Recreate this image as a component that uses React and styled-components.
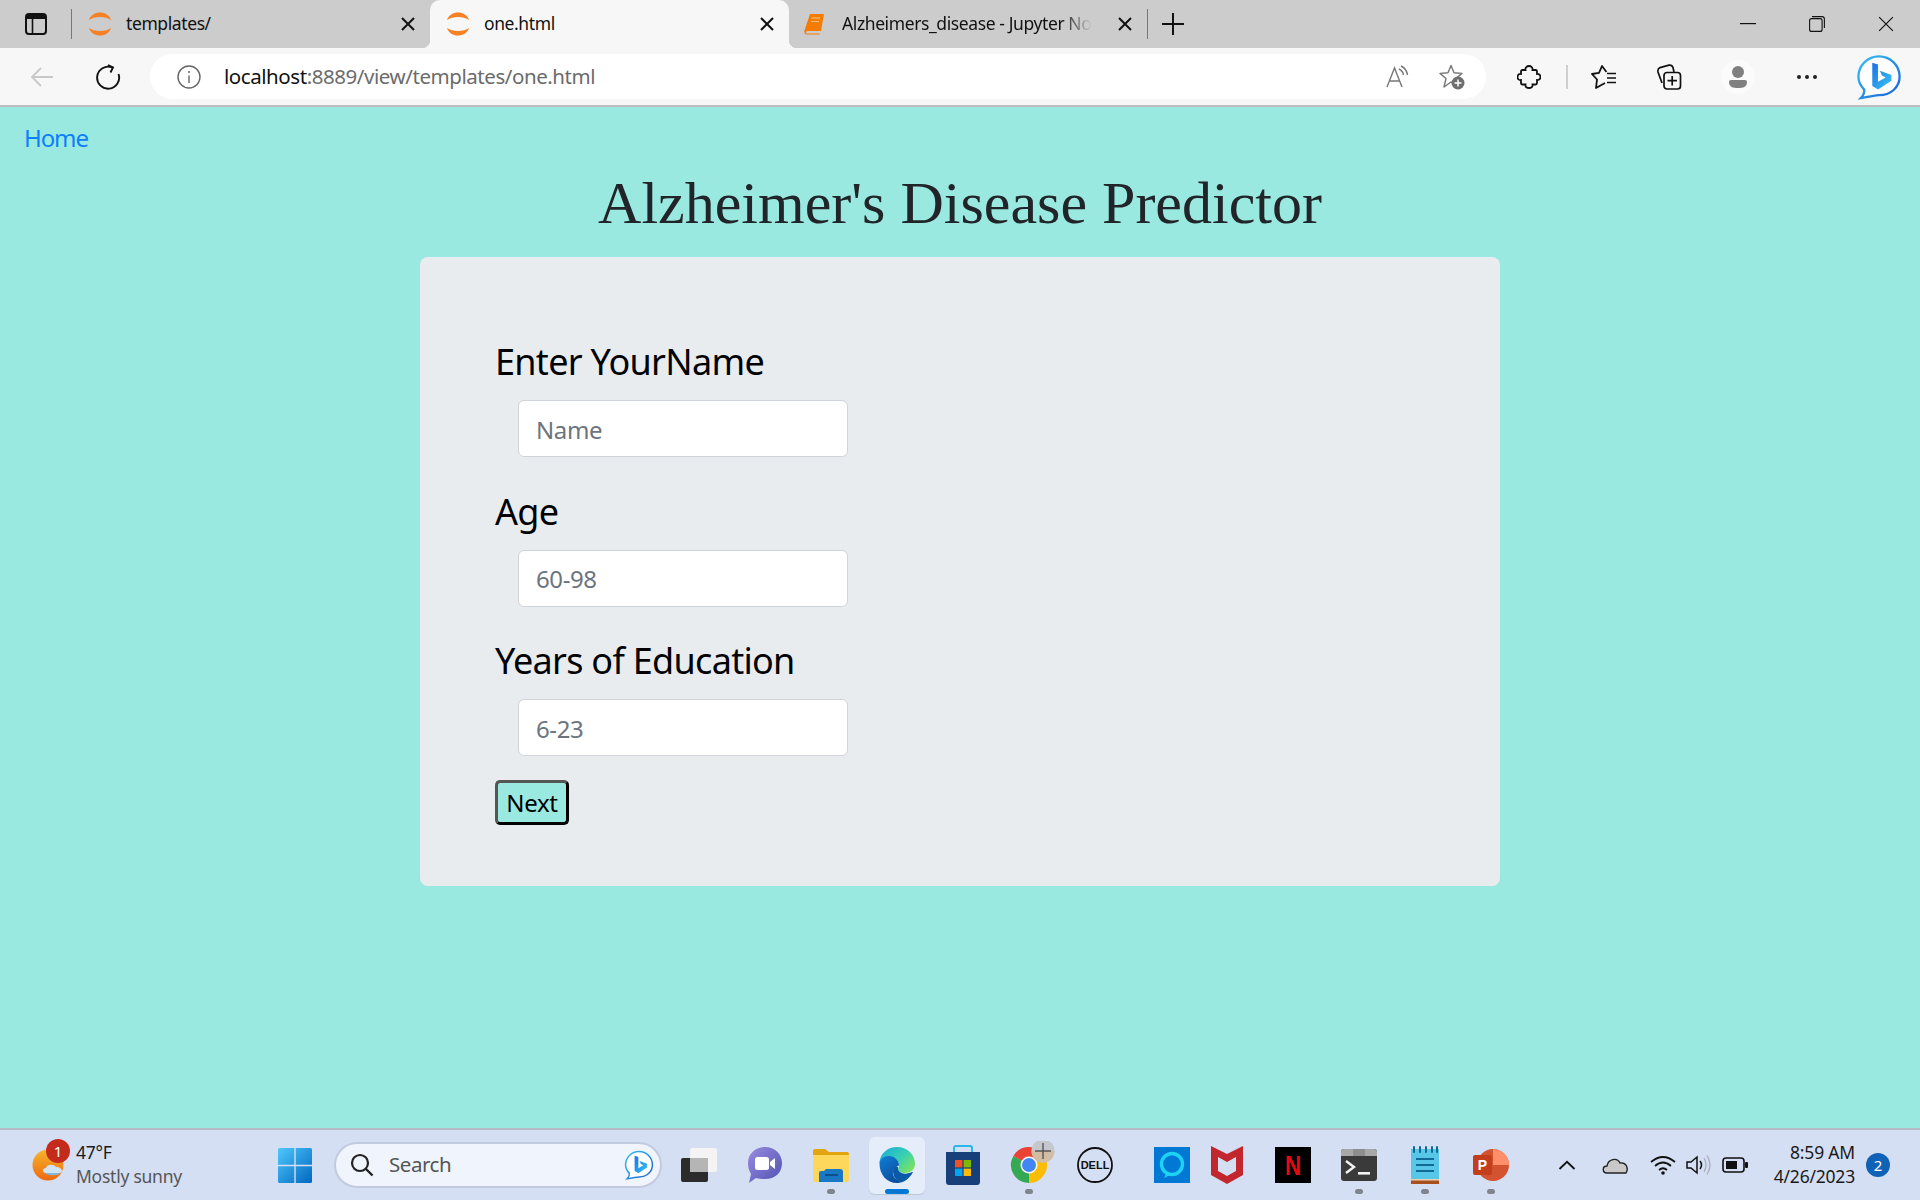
import React from "react";
import styled, { createGlobalStyle } from "styled-components";

const UI_FONT = `"Noto Sans", "Open Sans", sans-serif`;

const GlobalStyle = createGlobalStyle`
  html, body {
    margin: 0;
    padding: 0;
    height: 100%;
    overflow: hidden;
    font-family: ${UI_FONT};
  }
`;

const Screen = styled.div`
  width: 1920px;
  height: 1200px;
  display: flex;
  flex-direction: column;
  overflow: hidden;
`;

/* ---------- tab strip ---------- */
const TabStrip = styled.div`
  height: 48px;
  flex: none;
  display: flex;
  background: #cccccc;
`;

const StripLead = styled.div`
  width: 71px;
  display: flex;
  align-items: center;
  padding-left: 25px;
  box-sizing: border-box;
`;

const StripDivider = styled.div`
  width: 1px;
  height: 30px;
  margin-top: 9px;
  background: #777;
  flex: none;
`;

const Tab = styled.div`
  position: relative;
  width: ${(p) => p.$w}px;
  box-sizing: border-box;
  padding: 0 15px 0 ${(p) => p.$pl}px;
  display: flex;
  align-items: center;
  gap: ${(p) => p.$gap}px;
  flex: none;
  background: ${(p) => (p.$active ? "#f7f7f7" : "transparent")};
  border-radius: ${(p) => (p.$active ? "10px 10px 0 0" : "0")};
  ${(p) =>
    p.$active &&
    `
    &::before, &::after {
      content: "";
      position: absolute;
      bottom: 0;
      width: 8px;
      height: 8px;
    }
    &::before { left: -8px; background: radial-gradient(circle at 0 0, transparent 8px, #f7f7f7 8.5px); }
    &::after { right: -8px; background: radial-gradient(circle at 100% 0, transparent 8px, #f7f7f7 8.5px); }
  `}
`;

const TabTitle = styled.span`
  flex: 1;
  min-width: 0;
  font-size: 17.5px;
  letter-spacing: -0.4px;
  color: #111;
  white-space: nowrap;
  overflow: hidden;
  padding-bottom: 2px;
  ${(p) =>
    p.$fade &&
    `-webkit-mask-image: linear-gradient(to right, #000 84%, transparent 96%);
     mask-image: linear-gradient(to right, #000 84%, transparent 96%);`}
`;

const NewTab = styled.div`
  width: 50px;
  display: flex;
  align-items: center;
  justify-content: center;
`;

const WindowControls = styled.div`
  margin-left: auto;
  display: flex;
`;

const WindowButton = styled.div`
  width: 69px;
  display: flex;
  align-items: center;
  justify-content: center;
`;

/* ---------- toolbar ---------- */
const Toolbar = styled.div`
  height: 59px;
  flex: none;
  box-sizing: border-box;
  display: flex;
  align-items: center;
  background: #f7f7f7;
  border-bottom: 2px solid #bdbdbd;
  padding-left: 9px;
`;

const ToolSlot = styled.div`
  width: ${(p) => p.$w || 60}px;
  margin-left: ${(p) => p.$ml || 0}px;
  height: 44px;
  flex: none;
  display: flex;
  align-items: center;
  justify-content: center;
`;

const ToolDivider = styled.div`
  width: 2px;
  height: 24px;
  margin-left: 7px;
  background: #cfcfcf;
  flex: none;
`;

const AddressBar = styled.div`
  width: 1336px;
  height: 45px;
  margin-left: 9px;
  flex: none;
  box-sizing: border-box;
  background: #fff;
  border-radius: 23px;
  display: flex;
  align-items: center;
  padding: 0 7px 0 26px;
`;

const Url = styled.div`
  margin-left: 22px;
  padding-bottom: 2px;
  flex: 1;
  font-size: 20.5px;
  letter-spacing: -0.44px;
  color: #6b6b6b;
  white-space: nowrap;
  b {
    font-weight: 400;
    color: #111;
  }
`;

/* ---------- page ---------- */
const Page = styled.main`
  flex: 1;
  min-height: 0;
  background: #9ae9e1;
  display: flex;
  flex-direction: column;
  align-items: center;
`;

const HomeRow = styled.div`
  align-self: stretch;
  padding: 13px 24px 0;
  height: 36px;
`;

const HomeLink = styled.a`
  font-size: 24px;
  line-height: 36px;
  color: #0d7ffd;
  text-decoration: none;
  letter-spacing: -1.1px;
`;

const Title = styled.h1`
  margin: 11px 0 18px;
  font-family: "Liberation Serif", "Times New Roman", serif;
  font-weight: 400;
  font-size: 60px;
  line-height: 72px;
  color: #212529;
`;

const Card = styled.form`
  width: 1080px;
  box-sizing: border-box;
  background: #e9ecef;
  border-radius: 8px;
  padding: 78px 75px 61px;
`;

const Field = styled.div`
  margin-bottom: ${(p) => p.$mb}px;
`;

const FieldLabel = styled.label`
  display: block;
  font-size: 36px;
  line-height: 54px;
  letter-spacing: -0.7px;
  color: #000;
  margin-bottom: 11px;
`;

const TextInput = styled.input`
  display: block;
  margin-left: 23px;
  width: 330px;
  height: 57px;
  box-sizing: border-box;
  padding: 1px 18px 0 17px;
  border: 1.5px solid #ced4da;
  border-radius: 6px;
  background: #fff;
  font-family: ${UI_FONT};
  font-size: 24px;
  letter-spacing: -0.4px;
  outline: none;
  &::placeholder {
    color: #6c757d;
    opacity: 1;
  }
`;

const NextButton = styled.button`
  display: block;
  width: 74px;
  height: 45px;
  box-sizing: border-box;
  padding: 0;
  background: #9ae9e1;
  border-style: solid;
  border-width: 3px;
  border-color: #555 #000 #000 #555;
  border-radius: 5px;
  font-family: ${UI_FONT};
  font-size: 24px;
  letter-spacing: -0.3px;
  color: #000;
`;

/* ---------- taskbar ---------- */
const Taskbar = styled.footer`
  height: 72px;
  flex: none;
  box-sizing: border-box;
  border-top: 2px solid #b4bac6;
  background: #d5dff4;
  display: flex;
  align-items: center;
`;

const Weather = styled.div`
  position: relative;
  margin-left: 32px;
  width: 246px;
  height: 56px;
  display: flex;
  align-items: center;
  flex: none;
`;

const WeatherBadge = styled.span`
  position: absolute;
  left: 14px;
  top: 2px;
  width: 24px;
  height: 24px;
  border-radius: 50%;
  background: #c42b1c;
  color: #fff;
  font-size: 15px;
  line-height: 24px;
  text-align: center;
`;

const WeatherText = styled.div`
  margin-left: 11px;
  padding-bottom: 2px;
  display: flex;
  flex-direction: column;
  font-size: 17.5px;
  line-height: 24px;
  letter-spacing: -0.25px;
  color: #1a1a1a;
  span + span {
    color: #555;
  }
`;

const SearchBox = styled.div`
  margin-left: 22px;
  width: 328px;
  height: 46px;
  flex: none;
  box-sizing: border-box;
  background: #f0f4fd;
  border: 2px solid #c2cbdd;
  border-radius: 23px;
  display: flex;
  align-items: center;
  padding: 0 6px 0 14px;
  font-size: 20.5px;
  letter-spacing: -0.45px;
  color: #555;
  span {
    flex: 1;
    margin-left: 15px;
    padding-bottom: 2px;
  }
`;

const Slot = styled.div`
  position: relative;
  width: ${(p) => p.$w || 66}px;
  margin-left: ${(p) => p.$ml || 0}px;
  height: 57px;
  flex: none;
  display: flex;
  align-items: center;
  justify-content: center;
  ${(p) =>
    p.$active &&
    `
    &::before {
      content: "";
      position: absolute;
      inset: 0 5px;
      background: #e6edfa;
      border-radius: 6px;
      box-shadow: 0 1px 1px #bcc6da;
    }
    &::after {
      content: "";
      position: absolute;
      left: 21px;
      right: 21px;
      bottom: 0;
      height: 5px;
      border-radius: 3px;
      background: #0078d4;
    }
    svg { position: relative; }
  `}
  ${(p) =>
    p.$running &&
    `
    &::after {
      content: "";
      position: absolute;
      left: 50%;
      margin-left: -4px;
      bottom: 0;
      width: 8px;
      height: 5px;
      border-radius: 3px;
      background: #80848e;
    }
  `}
`;

const Clock = styled.div`
  width: 100px;
  margin-left: 2px;
  padding-bottom: 2px;
  flex: none;
  text-align: right;
  font-size: 17.5px;
  line-height: 24px;
  letter-spacing: -0.2px;
  color: #1a1a1a;
  white-space: nowrap;
`;

const NoticeBadge = styled.div`
  width: 24px;
  height: 24px;
  margin-left: 11px;
  flex: none;
  border-radius: 50%;
  background: #0f62b5;
  color: #fff;
  font-size: 15px;
  line-height: 24px;
  text-align: center;
`;

/* ---------- drawings ---------- */
const JupyterIcon = () => (
  <svg width="24" height="28" viewBox="0 0 24 28">
    <path d="M1 10 C4 0 20 0 23 10 C18 6 6 6 1 10Z" fill="#f58025" />
    <path d="M1 18 C6 22 18 22 23 18 C20 28 4 28 1 18Z" fill="#f58025" />
  </svg>
);

const BookIcon = () => (
  <svg width="22" height="22" viewBox="0 0 22 22">
    <path d="M6 1 H20 L17 18 H4 C1.5 18 1 20.5 3.5 20.5 H16 L15.5 21.5 H3 C0.5 21.5 0 19.5 0.5 17.5Z" fill="#f57c00" />
    <path d="M7.5 5 H16 M7 8.5 H15" stroke="#ffc583" strokeWidth="1.2" />
  </svg>
);

const CloseX = ({ size = 14, w = 2 }) => (
  <svg width={size} height={size} viewBox="0 0 14 14">
    <path d="M1 1 L13 13 M13 1 L1 13" stroke="#111" strokeWidth={w} fill="none" />
  </svg>
);

const BingIcon = ({ size }) => (
  <svg width={size} height={size} viewBox="0 0 48 48">
    <defs>
      <linearGradient id="bingRing" x1="0" y1="0" x2="1" y2="1">
        <stop offset="0" stopColor="#35c1f1" />
        <stop offset="1" stopColor="#1b5fd8" />
      </linearGradient>
      <linearGradient id="bingB" x1="0" y1="0" x2="1" y2="1">
        <stop offset="0" stopColor="#1c6fe8" />
        <stop offset="1" stopColor="#38c6ee" />
      </linearGradient>
    </defs>
    <path
      d="M24 2.5 C36 2.5 45.5 12 45.5 23.5 C45.5 35 36 43 24 43 C20 43 16 44.5 5 46 C8 43 9 40 8.5 37 C4.5 33 2.5 28.5 2.5 23.5 C2.5 12 12 2.5 24 2.5Z"
      fill="#fff"
      stroke="url(#bingRing)"
      strokeWidth="2.4"
    />
    <path d="M17 9 L23 11 V29 L31 24.5 L27 22.5 L25 17.5 L37 22 V28 L23 37 L17 33.5Z" fill="url(#bingB)" />
  </svg>
);

const WeatherIcon = () => (
  <svg width="33" height="32" viewBox="0 0 33 32">
    <defs>
      <linearGradient id="sunFill" x1="0" y1="0" x2="0" y2="1">
        <stop offset="0" stopColor="#f5b52b" />
        <stop offset="1" stopColor="#ee6a13" />
      </linearGradient>
    </defs>
    <circle cx="16" cy="16" r="15.5" fill="url(#sunFill)" />
    <path d="M14 24 C10 24 10 19 14 19 C15 15 22 15 24 18 C29 17 33 24 27 24Z" fill="#cfe4f7" />
    <path d="M13 24 H28 C26 27 16 27 13 24Z" fill="#7fb7e6" />
  </svg>
);

const WindowsLogo = () => (
  <svg width="34" height="35" viewBox="0 0 34 35">
    <defs>
      <linearGradient id="winFill" x1="0" y1="0" x2="1" y2="1">
        <stop offset="0" stopColor="#4fc8fb" />
        <stop offset="1" stopColor="#0067c0" />
      </linearGradient>
    </defs>
    <path d="M0 1.5 Q0 0 1.5 0 H16.3 V16.8 H0Z M17.7 0 H32.5 Q34 0 34 1.5 V16.8 H17.7Z M0 18.2 H16.3 V35 H1.5 Q0 35 0 33.5Z M17.7 18.2 H34 V33.5 Q34 35 32.5 35 H17.7Z" fill="url(#winFill)" />
  </svg>
);

const TaskViewIcon = () => (
  <svg width="36" height="34" viewBox="0 0 36 34">
    <rect x="0" y="10" width="27" height="24" rx="2" fill="#2b2b2b" />
    <rect x="9" y="0" width="27" height="24" rx="2" fill="#f4f4f4" />
    <rect x="9" y="10" width="18" height="14" fill="#b5b5b5" />
  </svg>
);

const TeamsIcon = () => (
  <svg width="34" height="36" viewBox="0 0 34 36">
    <defs>
      <linearGradient id="teamsFill" x1="0" y1="0" x2="1" y2="1">
        <stop offset="0" stopColor="#9a8be0" />
        <stop offset="1" stopColor="#4f52b2" />
      </linearGradient>
    </defs>
    <path d="M17 0 C27 0 34 7 34 16 C34 26 27 32 17 32 C14 32 11 32 8 31 L1 36 L3 27 C1 24 0 20 0 16 C0 7 7 0 17 0Z" fill="url(#teamsFill)" />
    <rect x="7" y="10" width="14" height="13" rx="2.5" fill="#fff" />
    <path d="M22 15 L27 11 V22 L22 18Z" fill="#fff" />
  </svg>
);

const ExplorerIcon = () => (
  <svg width="36" height="33" viewBox="0 0 36 33">
    <path d="M0 2 Q0 0 2 0 H12 L16 3 H34 Q36 3 36 5 V12 H0Z" fill="#e2a50f" />
    <path d="M0 6 H36 V31 Q36 33 34 33 H2 Q0 33 0 31Z" fill="#fdd65c" />
    <path d="M6 33 V24 Q6 22 8 22 H11 L13 20 H27 Q30 20 30 23 V33Z" fill="#1878c4" />
    <rect x="12" y="25" width="13" height="2" fill="#0f4f8f" />
  </svg>
);

const EdgeIcon = () => (
  <svg width="36" height="36" viewBox="0 0 36 36">
    <defs>
      <linearGradient id="edgeTop" x1="0" y1="0" x2="1" y2="0.8">
        <stop offset="0" stopColor="#18a8d8" />
        <stop offset="0.55" stopColor="#35d0b4" />
        <stop offset="1" stopColor="#7fe25c" />
      </linearGradient>
      <linearGradient id="edgeBase" x1="0" y1="0" x2="0.6" y2="1">
        <stop offset="0" stopColor="#0f7ed6" />
        <stop offset="1" stopColor="#0b4f9e" />
      </linearGradient>
    </defs>
    <path d="M18 0 C29 0 36 8 36 17 C36 23 31 26 26 26 C22 26 19 24 19 22 C19 21 20 20 20 18 C20 13 15 10 10 10 C5 10 1.5 13 0.5 15 C1.5 6 9 0 18 0Z" fill="url(#edgeTop)" />
    <path d="M0.5 15 C2 11 6 9 10 9 C15 9 20 13 20 18 C20 19 15 20 14 24 C13 30 18 34 22 35 C20 36 19 36 18 36 C8 36 0 28 0.5 15Z" fill="url(#edgeBase)" />
    <path d="M14 24 C14 20 17 19 19 20 C18 25 24 28 30 26 C32 25.5 33 25 34 25 C31 31 26 35 21 35.5 C17 34 14 29 14 24Z" fill="#0a5aa8" />
  </svg>
);

const StoreIcon = () => (
  <svg width="36" height="40" viewBox="0 0 36 40">
    <path d="M9 9 V3 Q9 1 11 1 H25 Q27 1 27 3 V9" fill="none" stroke="#29b6e8" strokeWidth="2" />
    <path d="M1 7 H35 V37 Q35 40 32 40 H4 Q1 40 1 37Z" fill="#17407a" />
    <rect x="10" y="15" width="7.4" height="7.4" fill="#f25022" />
    <rect x="18.6" y="15" width="7.4" height="7.4" fill="#7fba00" />
    <rect x="10" y="23.6" width="7.4" height="7.4" fill="#00a4ef" />
    <rect x="18.6" y="23.6" width="7.4" height="7.4" fill="#ffb900" />
  </svg>
);

const ChromeIcon = () => (
  <svg width="66" height="48" viewBox="0 0 66 48">
    <g transform="translate(15 6)">
      <path d="M18 18 L2.4 9 A18 18 0 0 1 33.6 9 Z" fill="#ea4335" />
      <path d="M18 18 L33.6 9 A18 18 0 0 1 18 36 Z" fill="#fbbc04" />
      <path d="M18 18 L18 36 A18 18 0 0 1 2.4 9 Z" fill="#34a853" />
      <circle cx="18" cy="18" r="8.5" fill="#fff" />
      <circle cx="18" cy="18" r="7" fill="#4285f4" />
    </g>
    <circle cx="47" cy="10" r="11.5" fill="#c4c8cc" />
    <path d="M35.5 10 A11.5 11.5 0 0 0 58.5 10Z" fill="#d2bda4" />
    <path d="M47 2 V18 M39 10 H55" stroke="#555" strokeWidth="1.4" />
  </svg>
);

const DellIcon = () => (
  <svg width="36" height="36" viewBox="0 0 36 36">
    <circle cx="18" cy="18" r="17" fill="none" stroke="#111" strokeWidth="1.8" />
    <text x="18" y="22" textAnchor="middle" fontFamily="Liberation Sans, sans-serif" fontWeight="700" fontSize="11" fill="#111">
      DELL
    </text>
  </svg>
);

const AlexaIcon = () => (
  <svg width="36" height="36" viewBox="0 0 36 36">
    <rect width="36" height="36" fill="#0078d4" />
    <circle cx="18" cy="17" r="10.5" fill="none" stroke="#1cd2f5" strokeWidth="3.4" />
    <path d="M10 31 L13 25 L18 27Z" fill="#1cd2f5" />
  </svg>
);

const McAfeeIcon = () => (
  <svg width="32" height="38" viewBox="0 0 32 38">
    <path d="M0 0 L16 8 L32 0 V29 L16 38 L0 29Z" fill="#c1272d" />
    <path d="M7 11 L16 16 L25 11 V25 L16 30 L7 25Z" fill="#d5dff4" />
  </svg>
);

const NetflixIcon = () => (
  <svg width="36" height="36" viewBox="0 0 36 36">
    <rect width="36" height="36" fill="#000" />
    <text x="18" y="28" textAnchor="middle" fontFamily="Liberation Sans, sans-serif" fontWeight="700" fontSize="28" fill="#e50914" transform="translate(3.6 0) scale(0.8 1)">
      N
    </text>
  </svg>
);

const TerminalIcon = () => (
  <svg width="36" height="32" viewBox="0 0 36 32">
    <rect width="36" height="32" rx="3" fill="#3a3a3a" />
    <path d="M0 3 Q0 0 3 0 H33 Q36 0 36 3 V7 H0Z" fill="#a8a8a8" />
    <rect x="12" y="0" width="12" height="7" fill="#8e8e8e" />
    <path d="M5 12 L13 18 L5 24" fill="none" stroke="#f2f2f2" strokeWidth="2.4" />
    <rect x="17" y="23" width="12" height="2.6" fill="#f2f2f2" />
  </svg>
);

const NotepadIcon = () => (
  <svg width="28" height="38" viewBox="0 0 28 38">
    <rect y="3" width="28" height="31" fill="#58c6e6" />
    <path d="M0 33 H28 V38 H0Z" fill="#a9501c" />
    <path d="M0 33 H28 V34.5 H0Z" fill="#e6d2b8" />
    <path d="M3 1 V6 M9 1 V6 M15 1 V6 M21 1 V6 M26 1 V6" stroke="#0d6a96" strokeWidth="2" strokeLinecap="round" />
    <path d="M5 13 H23 M5 19 H23 M5 25 H23" stroke="#0f6a97" strokeWidth="2" />
  </svg>
);

const PowerPointIcon = () => (
  <svg width="36" height="36" viewBox="0 0 36 36">
    <circle cx="20" cy="18" r="16" fill="#d35230" />
    <path d="M20 2 A16 16 0 0 1 36 18 H20Z" fill="#ff8f6b" />
    <rect x="0" y="8" width="19" height="20" rx="2" fill="#c43e1c" />
    <text x="9.5" y="23" textAnchor="middle" fontFamily="Liberation Sans, sans-serif" fontWeight="700" fontSize="14" fill="#fff">
      P
    </text>
  </svg>
);

const App = () => (
  <>
    <GlobalStyle />
    <Screen>
      <TabStrip>
        <StripLead>
          <svg width="22" height="22" viewBox="0 0 22 22">
            <rect x="1" y="1" width="20" height="20" rx="3" fill="none" stroke="#111" strokeWidth="2" />
            <path d="M1 4 Q1 1 4 1 H18 Q21 1 21 4 V6 H1Z" fill="#111" />
            <path d="M7.5 6 V21" stroke="#111" strokeWidth="1.6" />
          </svg>
        </StripLead>
        <StripDivider />
        <Tab $w={358} $pl={16} $gap={14}>
          <JupyterIcon />
          <TabTitle>templates/</TabTitle>
          <CloseX />
        </Tab>
        <Tab $w={359} $pl={16} $gap={14} $active>
          <JupyterIcon />
          <TabTitle>one.html</TabTitle>
          <CloseX />
        </Tab>
        <Tab $w={358} $pl={15} $gap={16}>
          <BookIcon />
          <TabTitle $fade>Alzheimers_disease - Jupyter Notebook</TabTitle>
          <CloseX />
        </Tab>
        <StripDivider />
        <NewTab>
          <svg width="22" height="22" viewBox="0 0 22 22">
            <path d="M11 0 V22 M0 11 H22" stroke="#111" strokeWidth="2" />
          </svg>
        </NewTab>
        <WindowControls>
          <WindowButton>
            <svg width="16" height="2" viewBox="0 0 16 2">
              <rect width="16" height="1.2" fill="#111" />
            </svg>
          </WindowButton>
          <WindowButton>
            <svg width="16" height="16" viewBox="0 0 16 16">
              <rect x="0.6" y="2.6" width="12.5" height="12.8" rx="2" fill="none" stroke="#111" strokeWidth="1.1" />
              <path d="M3 .6 H13 Q15.4 .6 15.4 3 V12" fill="none" stroke="#111" strokeWidth="1.1" />
            </svg>
          </WindowButton>
          <WindowButton>
            <CloseX size={16} w={1} />
          </WindowButton>
        </WindowControls>
      </TabStrip>

      <Toolbar>
        <ToolSlot $w={66}>
          <svg width="24" height="22" viewBox="0 0 24 22">
            <path d="M23 11 H2 M11 2 L2 11 L11 20" fill="none" stroke="#c8c8c8" strokeWidth="1.8" />
          </svg>
        </ToolSlot>
        <ToolSlot $w={66}>
          <svg width="26" height="26" viewBox="0 0 26 26">
            <path d="M17 3.4 A11 11 0 1 0 23.5 10" fill="none" stroke="#111" strokeWidth="1.9" />
            <path d="M13 1 L18 3.5 L15.5 8.5" fill="none" stroke="#111" strokeWidth="1.9" />
          </svg>
        </ToolSlot>
        <AddressBar>
          <svg width="26" height="26" viewBox="0 0 26 26">
            <circle cx="13" cy="13" r="11" fill="none" stroke="#666" strokeWidth="1.4" />
            <path d="M13 11.5 V19" stroke="#666" strokeWidth="1.4" />
            <circle cx="13" cy="8" r="1" fill="#666" />
          </svg>
          <Url>
            <b>localhost</b>:8889/view/templates/one.html
          </Url>
          <ToolSlot $w={54}>
            <svg width="24" height="24" viewBox="0 0 24 24">
              <path d="M1 22 L8.5 3 L16 22 M3.6 16 H13.4" fill="none" stroke="#777" strokeWidth="1.4" />
              <path d="M13 4 Q17 6 17.5 10 M15 1 Q20.5 3.5 21.5 10" fill="none" stroke="#777" strokeWidth="1.4" />
            </svg>
          </ToolSlot>
          <ToolSlot $w={54}>
            <svg width="26" height="26" viewBox="0 0 26 26">
              <path d="M12 1.5 L15 8.8 L23 9.4 L17 14.5 L18.5 22 L12 18 L5 23 L7 14.5 L1 9.4 L9 8.8Z" fill="none" stroke="#777" strokeWidth="1.4" strokeLinejoin="round" />
              <circle cx="19" cy="19" r="6.5" fill="#6e6e6e" />
              <path d="M19 15.5 V22.5 M15.5 19 H22.5" stroke="#fff" strokeWidth="1.5" />
            </svg>
          </ToolSlot>
        </AddressBar>
        <ToolSlot $ml={13}>
          <svg width="24" height="24" viewBox="0 0 24 24">
            <path d="M8.5 5 C8 2.5 10 1 12 1 C14 1 16 2.5 15.5 5 H18.5 Q20 5 20 6.5 V9 C22.5 8.7 23.5 10.5 23.5 12 C23.5 13.5 22.5 15.3 20 15 V18 Q20 19.5 18.5 19.5 H15.5 C16 22 14 23 12 23 C10 23 8 22 8.5 19.5 H5.5 Q4 19.5 4 18 V15 C1.5 15.5 .5 13.5 .5 12 C.5 10.5 1.5 8.5 4 9 V6.5 Q4 5 5.5 5Z" fill="none" stroke="#111" strokeWidth="1.8" />
          </svg>
        </ToolSlot>
        <ToolDivider />
        <ToolSlot $ml={6}>
          <svg width="26" height="26" viewBox="0 0 26 26">
            <path d="M15.5 8 L11 2 L8 8.8 L1 10 L6 15.5 L5 24 L14 19" fill="none" stroke="#111" strokeWidth="1.8" strokeLinejoin="round" />
            <path d="M16 9.5 H25 M16 14 H25 M16 18.5 H25" stroke="#111" strokeWidth="1.7" />
          </svg>
        </ToolSlot>
        <ToolSlot $ml={5}>
          <svg width="26" height="26" viewBox="0 0 26 26">
            <path d="M6 19 L2 8 Q1.4 4.5 4 3.6 L13 1.2 Q16 .8 17 3.5 L18 8" fill="none" stroke="#111" strokeWidth="1.7" />
            <rect x="8" y="8.5" width="16.5" height="16.5" rx="3" fill="#f7f7f7" stroke="#111" strokeWidth="1.7" />
            <path d="M16.2 12 V21.5 M11.5 16.7 H21" stroke="#111" strokeWidth="1.7" />
          </svg>
        </ToolSlot>
        <ToolSlot $ml={9}>
          <svg width="36" height="36" viewBox="0 0 36 36">
            <circle cx="18" cy="18" r="17" fill="#fbfbfb" />
            <circle cx="18" cy="13" r="6" fill="#808080" />
            <path d="M9 23 Q9 21 11 21 H25 Q27 21 27 23 C27 28 23 29 18 29 C13 29 9 28 9 23Z" fill="#808080" />
          </svg>
        </ToolSlot>
        <ToolSlot $ml={9}>
          <svg width="22" height="6" viewBox="0 0 22 6">
            <circle cx="3" cy="3" r="2" fill="#222" />
            <circle cx="11" cy="3" r="2" fill="#222" />
            <circle cx="19" cy="3" r="2" fill="#222" />
          </svg>
        </ToolSlot>
        <ToolSlot $ml={12}>
          <BingIcon size={46} />
        </ToolSlot>
      </Toolbar>

      <Page>
        <HomeRow>
          <HomeLink href="#home">Home</HomeLink>
        </HomeRow>
        <Title>Alzheimer's Disease Predictor</Title>
        <Card onSubmit={(e) => e.preventDefault()}>
          <Field $mb={27.5}>
            <FieldLabel>Enter YourName</FieldLabel>
            <TextInput placeholder="Name" />
          </Field>
          <Field $mb={27.5}>
            <FieldLabel>Age</FieldLabel>
            <TextInput placeholder="60-98" />
          </Field>
          <Field $mb={24}>
            <FieldLabel>Years of Education</FieldLabel>
            <TextInput placeholder="6-23" />
          </Field>
          <NextButton type="submit">Next</NextButton>
        </Card>
      </Page>

      <Taskbar>
        <Weather>
          <WeatherIcon />
          <WeatherBadge>1</WeatherBadge>
          <WeatherText>
            <span>47°F</span>
            <span>Mostly sunny</span>
          </WeatherText>
        </Weather>
        <WindowsLogo />
        <SearchBox>
          <svg width="24" height="24" viewBox="0 0 24 24">
            <circle cx="10" cy="10" r="8" fill="none" stroke="#222" strokeWidth="2.2" />
            <path d="M16 16 L22.5 22.5" stroke="#222" strokeWidth="2.4" />
          </svg>
          <span>Search</span>
          <BingIcon size={30} />
        </SearchBox>
        <Slot $ml={4}><TaskViewIcon /></Slot>
        <Slot><TeamsIcon /></Slot>
        <Slot $running><ExplorerIcon /></Slot>
        <Slot $active><EdgeIcon /></Slot>
        <Slot><StoreIcon /></Slot>
        <Slot $running><ChromeIcon /></Slot>
        <Slot><DellIcon /></Slot>
        <Slot $ml={11}><AlexaIcon /></Slot>
        <Slot $ml={-11}><McAfeeIcon /></Slot>
        <Slot><NetflixIcon /></Slot>
        <Slot $running><TerminalIcon /></Slot>
        <Slot $running><NotepadIcon /></Slot>
        <Slot $running><PowerPointIcon /></Slot>
        <Slot $w={40} $ml={23}>
          <svg width="18" height="10" viewBox="0 0 18 10">
            <path d="M1.5 9 L9 1.8 L16.5 9" fill="none" stroke="#111" strokeWidth="1.8" />
          </svg>
        </Slot>
        <Slot $w={48} $ml={4}>
          <svg width="26" height="18" viewBox="0 0 26 18">
            <path d="M5 17 C0 17 0 10 5 10 C6 3 15 1 18 7 C24 6 27 12 24 17Z" fill="#c9c9c9" stroke="#222" strokeWidth="1.4" />
          </svg>
        </Slot>
        <Slot $w={36} $ml={6}>
          <svg width="26" height="20" viewBox="0 0 26 20">
            <path d="M1 7 Q13 -3 25 7 M5 11 Q13 4 21 11 M9 15 Q13 11.5 17 15" fill="none" stroke="#111" strokeWidth="1.7" />
            <circle cx="13" cy="18" r="1.8" fill="#111" />
          </svg>
        </Slot>
        <Slot $w={36}>
          <svg width="26" height="22" viewBox="0 0 26 22">
            <path d="M1 8 H5 L11 3 V19 L5 14 H1Z" fill="none" stroke="#111" strokeWidth="1.5" />
            <path d="M14 7 Q17 11 14 15" fill="none" stroke="#111" strokeWidth="1.5" />
            <path d="M18 4 Q22 11 18 18 M21 1.5 Q27 11 21 20.5" fill="none" stroke="#a8adb8" strokeWidth="1.3" />
          </svg>
        </Slot>
        <Slot $w={36}>
          <svg width="26" height="16" viewBox="0 0 26 16">
            <rect x="1" y="1" width="21" height="14" rx="3" fill="none" stroke="#111" strokeWidth="1.6" />
            <rect x="4" y="4" width="11" height="8" fill="#111" />
            <rect x="23" y="5" width="3" height="6" rx="1" fill="#111" />
          </svg>
        </Slot>
        <Clock>
          8:59 AM
          <br />
          4/26/2023
        </Clock>
        <NoticeBadge>2</NoticeBadge>
      </Taskbar>
    </Screen>
  </>
);

export default App;
